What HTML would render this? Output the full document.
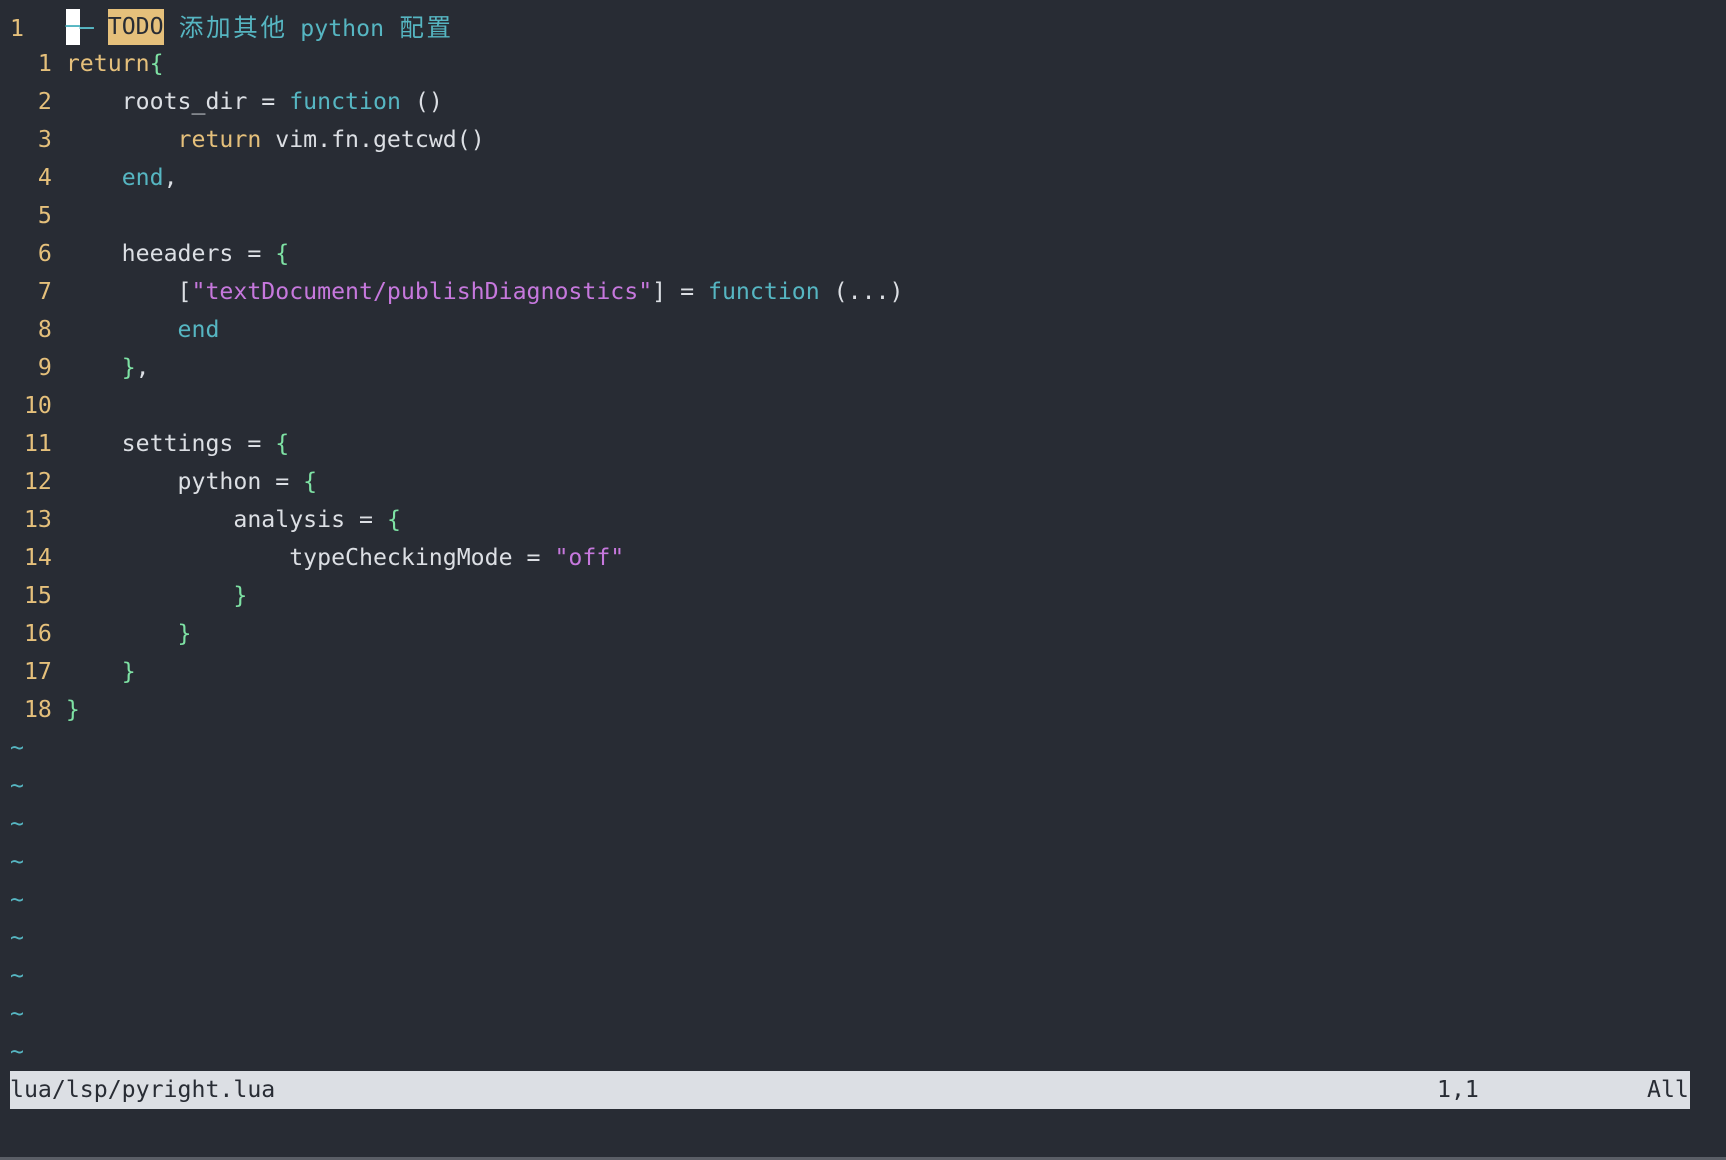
<!DOCTYPE html>
<html><head><meta charset="utf-8"><style>
html,body{margin:0;padding:0}
body{width:1726px;height:1160px;background:#282c34;overflow:hidden;position:relative;font-family:"DejaVu Sans Mono","Liberation Mono","Noto Sans CJK SC",monospace;font-size:23.2px;color:#dcdfe4}
.r{position:absolute;left:10px;height:38px;line-height:38px;white-space:pre}
.n{color:#e5c07b}.k{color:#e5c07b}.c{color:#56b6c2}.g{color:#7ee2a4}.s{color:#c678dd}.t{color:#56b6c2}
.cj{display:inline-block;width:2ch;text-align:center;font-family:"Noto Sans CJK SC",sans-serif;font-size:24.5px}
.blk{display:inline-block;height:36px;line-height:36px;vertical-align:top;margin-top:1px}
.cur{background:#ffffff;color:#56b6c2}
.todo{background:#e5c07b;color:#282c34}
.st{position:absolute;left:10px;top:1071px;width:1680px;height:38px;line-height:38px;background:#dcdfe4;color:#282c34;white-space:pre}
.bot{position:absolute;left:0;top:1157px;width:1726px;height:3px;background:#5a5e66}
</style></head><body>
<div class="r" style="top:8px"><span class="n">1</span>   <span class="cur blk">─</span><span class="c">─</span> <span class="todo blk">TODO</span><span class="c"> <span class="cj">添</span><span class="cj">加</span><span class="cj">其</span><span class="cj">他</span> python <span class="cj">配</span><span class="cj">置</span></span></div>
<div class="r" style="top:45px"><span class="n">  1 </span><span class="k">return</span><span class="g">{</span></div>
<div class="r" style="top:83px"><span class="n">  2 </span>    roots_dir = <span class="c">function</span> ()</div>
<div class="r" style="top:121px"><span class="n">  3 </span>        <span class="k">return</span> vim.fn.getcwd()</div>
<div class="r" style="top:159px"><span class="n">  4 </span>    <span class="c">end</span>,</div>
<div class="r" style="top:197px"><span class="n">  5 </span></div>
<div class="r" style="top:235px"><span class="n">  6 </span>    heeaders = <span class="g">{</span></div>
<div class="r" style="top:273px"><span class="n">  7 </span>        [<span class="s">"textDocument/publishDiagnostics"</span>] = <span class="c">function</span> (...)</div>
<div class="r" style="top:311px"><span class="n">  8 </span>        <span class="c">end</span></div>
<div class="r" style="top:349px"><span class="n">  9 </span>    <span class="g">}</span>,</div>
<div class="r" style="top:387px"><span class="n"> 10 </span></div>
<div class="r" style="top:425px"><span class="n"> 11 </span>    settings = <span class="g">{</span></div>
<div class="r" style="top:463px"><span class="n"> 12 </span>        python = <span class="g">{</span></div>
<div class="r" style="top:501px"><span class="n"> 13 </span>            analysis = <span class="g">{</span></div>
<div class="r" style="top:539px"><span class="n"> 14 </span>                typeCheckingMode = <span class="s">"off"</span></div>
<div class="r" style="top:577px"><span class="n"> 15 </span>            <span class="g">}</span></div>
<div class="r" style="top:615px"><span class="n"> 16 </span>        <span class="g">}</span></div>
<div class="r" style="top:653px"><span class="n"> 17 </span>    <span class="g">}</span></div>
<div class="r" style="top:691px"><span class="n"> 18 </span><span class="g">}</span></div>
<div class="r t" style="top:729px">~</div>
<div class="r t" style="top:767px">~</div>
<div class="r t" style="top:805px">~</div>
<div class="r t" style="top:843px">~</div>
<div class="r t" style="top:881px">~</div>
<div class="r t" style="top:919px">~</div>
<div class="r t" style="top:957px">~</div>
<div class="r t" style="top:995px">~</div>
<div class="r t" style="top:1033px">~</div>
<div class="st">lua/lsp/pyright.lua<span style="position:absolute;left:1427px">1,1</span><span style="position:absolute;left:1637px">All</span></div>
<div class="bot"></div>
</body></html>
